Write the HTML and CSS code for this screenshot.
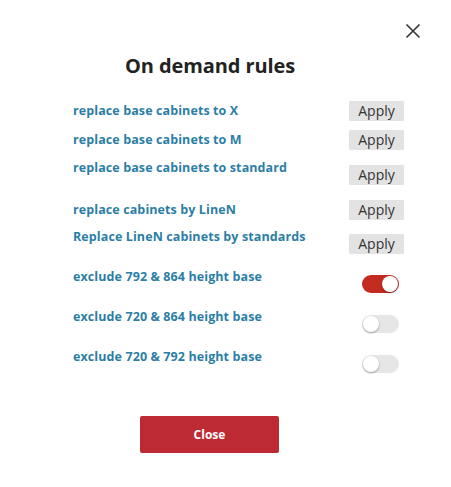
FILE: index.html
```html
<!DOCTYPE html>
<html>
<head>
<meta charset="utf-8">
<link rel="stylesheet" href="styles.css">
</head>
<body>
<div class="modal">
  <button class="x" aria-label="close">
    <svg width="16" height="16" viewBox="0 0 16 16"><path d="M1.5 1.5L14.5 14.5M14.5 1.5L1.5 14.5" stroke="#333" stroke-width="1.6" fill="none"/></svg>
  </button>
  <h1 class="title">On demand rules</h1>
  <div class="rules">
    <div class="row r1"><span class="label">replace base cabinets to X</span><button class="apply">Apply</button></div>
    <div class="row r2"><span class="label">replace base cabinets to M</span><button class="apply">Apply</button></div>
    <div class="row r3"><span class="label">replace base cabinets to standard</span><button class="apply low">Apply</button></div>
    <div class="row r4"><span class="label">replace cabinets by LineN</span><button class="apply">Apply</button></div>
    <div class="row r5"><span class="label">Replace LineN cabinets by standards</span><button class="apply low">Apply</button></div>
    <div class="row t1"><span class="label">exclude 792 &amp; 864 height base</span><span class="toggle on"><span class="knob"></span></span></div>
    <div class="row t2"><span class="label">exclude 720 &amp; 864 height base</span><span class="toggle"><span class="knob"></span></span></div>
    <div class="row t3"><span class="label">exclude 720 &amp; 792 height base</span><span class="toggle"><span class="knob"></span></span></div>
  </div>
  <div class="footer"><button class="close">Close</button></div>
</div>
</body>
</html>
```
FILE: styles.css
```css
html, body { margin: 0; padding: 0; background: #fff; }
body { font-family: "Open Sans", "Noto Sans", sans-serif; }
.modal { width: 420px; position: relative; padding-top: 52px; }
.x { position: absolute; left: 405px; top: 23px; width: 16px; height: 16px; padding: 0; border: 0; background: none; display: block; }
.x svg { display: block; }
.title { margin: 0; text-align: center; font-size: 20px; font-weight: 700; color: #222; line-height: 28px; letter-spacing: -0.1px; }
.rules { margin: 20px 0 0 73px; width: 331px; display: flex; flex-direction: column; }
.row { display: flex; justify-content: space-between; align-items: flex-start; }
.label { font-size: 12.5px; font-weight: 700; color: #2b7ea5; line-height: 20px; letter-spacing: 0.1px; padding-top: 1px; }
.apply { margin-top: 1px; width: 55px; height: 20px; padding: 0; border: 0; border-radius: 1px; background: #e3e3e3; color: #333; font-family: "Open Sans", sans-serif; font-size: 14px; line-height: 20px; }
.apply.low { margin-top: 8px; }
.r2 { margin-top: 8px; }
.r3 { margin-top: 7px; }
.r4 { margin-top: 14px; }
.r5 { margin-top: 6px; }
.t1 { margin-top: 12px; }
.t2, .t3 { margin-top: 13px; }
.toggle { margin-top: 9px; margin-right: 5px; width: 37px; height: 18px; border-radius: 9px; background: #e6e6e6; position: relative; }
.toggle.on { background: #c42b20; }
.knob { position: absolute; top: 1px; left: 1px; width: 16px; height: 16px; border-radius: 50%; background: #fff; box-shadow: 0 1px 2px rgba(0,0,0,0.35); }
.toggle.on .knob { left: 20px; }
.footer { margin-top: 43px; display: flex; justify-content: center; }
.close { margin-left: -1px; width: 139px; height: 37px; border: 0; border-radius: 2px; background: #be2a33; color: #fff; font-family: "Open Sans", sans-serif; font-weight: 700; font-size: 12px; }
```
